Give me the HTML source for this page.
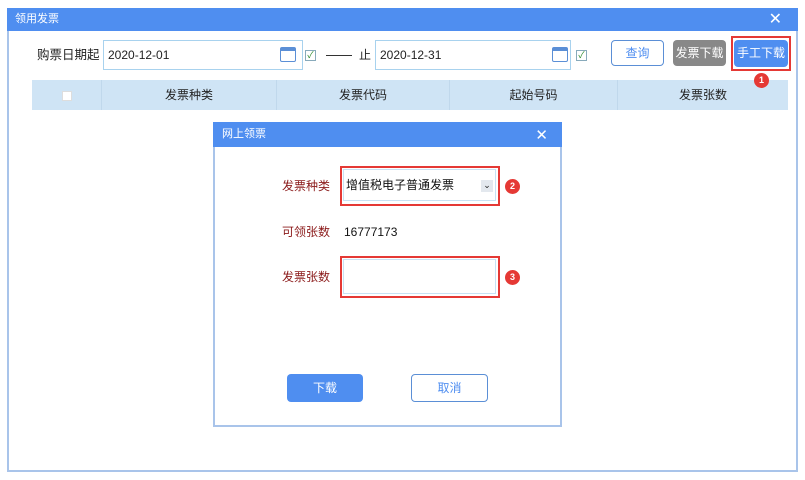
<!DOCTYPE html>
<html><head><meta charset="utf-8"><style>
*{box-sizing:border-box;margin:0;padding:0}
body{width:805px;height:480px;background:#fff;position:relative;overflow:hidden;font-family:"Liberation Sans","Noto Sans CJK SC",sans-serif;font-size:12px;line-height:14px;color:#222}
.a{position:absolute}
.badge{position:absolute;width:15px;height:15px;border-radius:50%;background:#e53935;color:#fff;font-size:9px;font-weight:bold;text-align:center;line-height:15px;z-index:5}
.chk{position:absolute;width:11px;height:11px;border:1px solid #8ab;background:#fff;font-size:9px;color:#2a8a2a;line-height:9px;text-align:center}
.th{position:absolute;top:0;height:30px;line-height:30px;text-align:center;border-right:1px solid #c0d8ec}
.cal{position:absolute;width:16px;height:15px;border:1.5px solid #5b8fd6;border-top-width:4px;border-radius:2px}
.btn{position:absolute;border-radius:4px;text-align:center;font-size:12px}
</style></head><body>
<div class="a" style="left:7px;top:8px;width:791px;height:464px;border:2px solid #a9c4ea;border-top:none"></div>
<div class="a" style="left:7px;top:8px;width:791px;height:23px;background:#4f8ef0;color:#fff;font-size:11px;line-height:23px;padding-left:8px">领用发票<span style="position:absolute;right:16px;top:0;font-size:16px">✕</span></div>

<div class="a" style="left:37px;top:48px;font-size:12.5px">购票日期起</div>
<div class="a" style="left:103px;top:40px;width:200px;height:30px;border:1px solid #a8d2ee;padding-left:4px;line-height:28px">2020-12-01</div>
<div class="cal" style="left:280px;top:47px"></div>
<div class="chk" style="left:305px;top:50px">✓</div>
<div class="a" style="left:326px;top:55px;width:26px;height:1px;background:#333"></div>
<div class="a" style="left:359px;top:48px">止</div>
<div class="a" style="left:375px;top:40px;width:196px;height:30px;border:1px solid #a8d2ee;padding-left:4px;line-height:28px">2020-12-31</div>
<div class="cal" style="left:552px;top:47px"></div>
<div class="chk" style="left:576px;top:50px">✓</div>
<div class="btn" style="left:611px;top:40px;width:53px;height:26px;border:1px solid #5b8fd6;color:#4f8ef0;line-height:24px">查询</div>
<div class="btn" style="left:673px;top:40px;width:53px;height:26px;background:#888;color:#fff;line-height:26px">发票下载</div>
<div class="a" style="left:731px;top:36px;width:60px;height:35px;border:2px solid #e53935"></div>
<div class="btn" style="left:734px;top:40px;width:54px;height:27px;background:#4f8ef0;color:#fff;line-height:27px">手工下载</div>
<div class="badge" style="left:754px;top:73px">1</div>

<div class="a" style="left:32px;top:80px;width:756px;height:30px;background:#cfe4f5">
<div class="th" style="left:0;width:70px"><span style="display:inline-block;width:10px;height:10px;background:#fff;border:1px solid #ddd;vertical-align:middle"></span></div>
<div class="th" style="left:70px;width:175px">发票种类</div>
<div class="th" style="left:245px;width:173px">发票代码</div>
<div class="th" style="left:418px;width:168px">起始号码</div>
<div class="th" style="left:586px;width:170px;border:none">发票张数</div>
</div>

<div class="a" style="left:213px;top:122px;width:349px;height:305px;border:2px solid #a9c4ea;background:#fff"></div>
<div class="a" style="left:213px;top:122px;width:349px;height:25px;background:#4f8ef0;color:#fff;font-size:11px;line-height:25px;padding-left:9px">网上领票<span style="position:absolute;right:14px;top:1px;font-size:15px">✕</span></div>
<div class="a" style="left:282px;top:179px;color:#8b1a1a">发票种类</div>
<div class="a" style="left:340px;top:166px;width:160px;height:40px;border:2px solid #e53935"></div>
<div class="a" style="left:343px;top:169px;width:153px;height:32px;border:1px solid #c8e2f4;line-height:30px;padding-left:2px;font-size:12px;color:#111">增值税电子普通发票</div>
<div class="a" style="left:481px;top:180px;width:12px;height:12px;background:#e3e8ee;font-size:9px;text-align:center;line-height:10px">⌄</div>
<div class="badge" style="left:505px;top:179px">2</div>
<div class="a" style="left:282px;top:225px;color:#8b1a1a">可领张数</div>
<div class="a" style="left:344px;top:225px;color:#111">16777173</div>
<div class="a" style="left:282px;top:270px;color:#8b1a1a">发票张数</div>
<div class="a" style="left:340px;top:256px;width:160px;height:42px;border:2px solid #e53935"></div>
<div class="a" style="left:343px;top:259px;width:153px;height:35px;border:1px solid #c8e2f4"></div>
<div class="badge" style="left:505px;top:270px">3</div>
<div class="btn" style="left:287px;top:374px;width:76px;height:28px;background:#4f8ef0;color:#fff;line-height:28px">下载</div>
<div class="btn" style="left:411px;top:374px;width:77px;height:28px;border:1px solid #5b8fd6;color:#4f8ef0;line-height:26px">取消</div>
</body></html>
